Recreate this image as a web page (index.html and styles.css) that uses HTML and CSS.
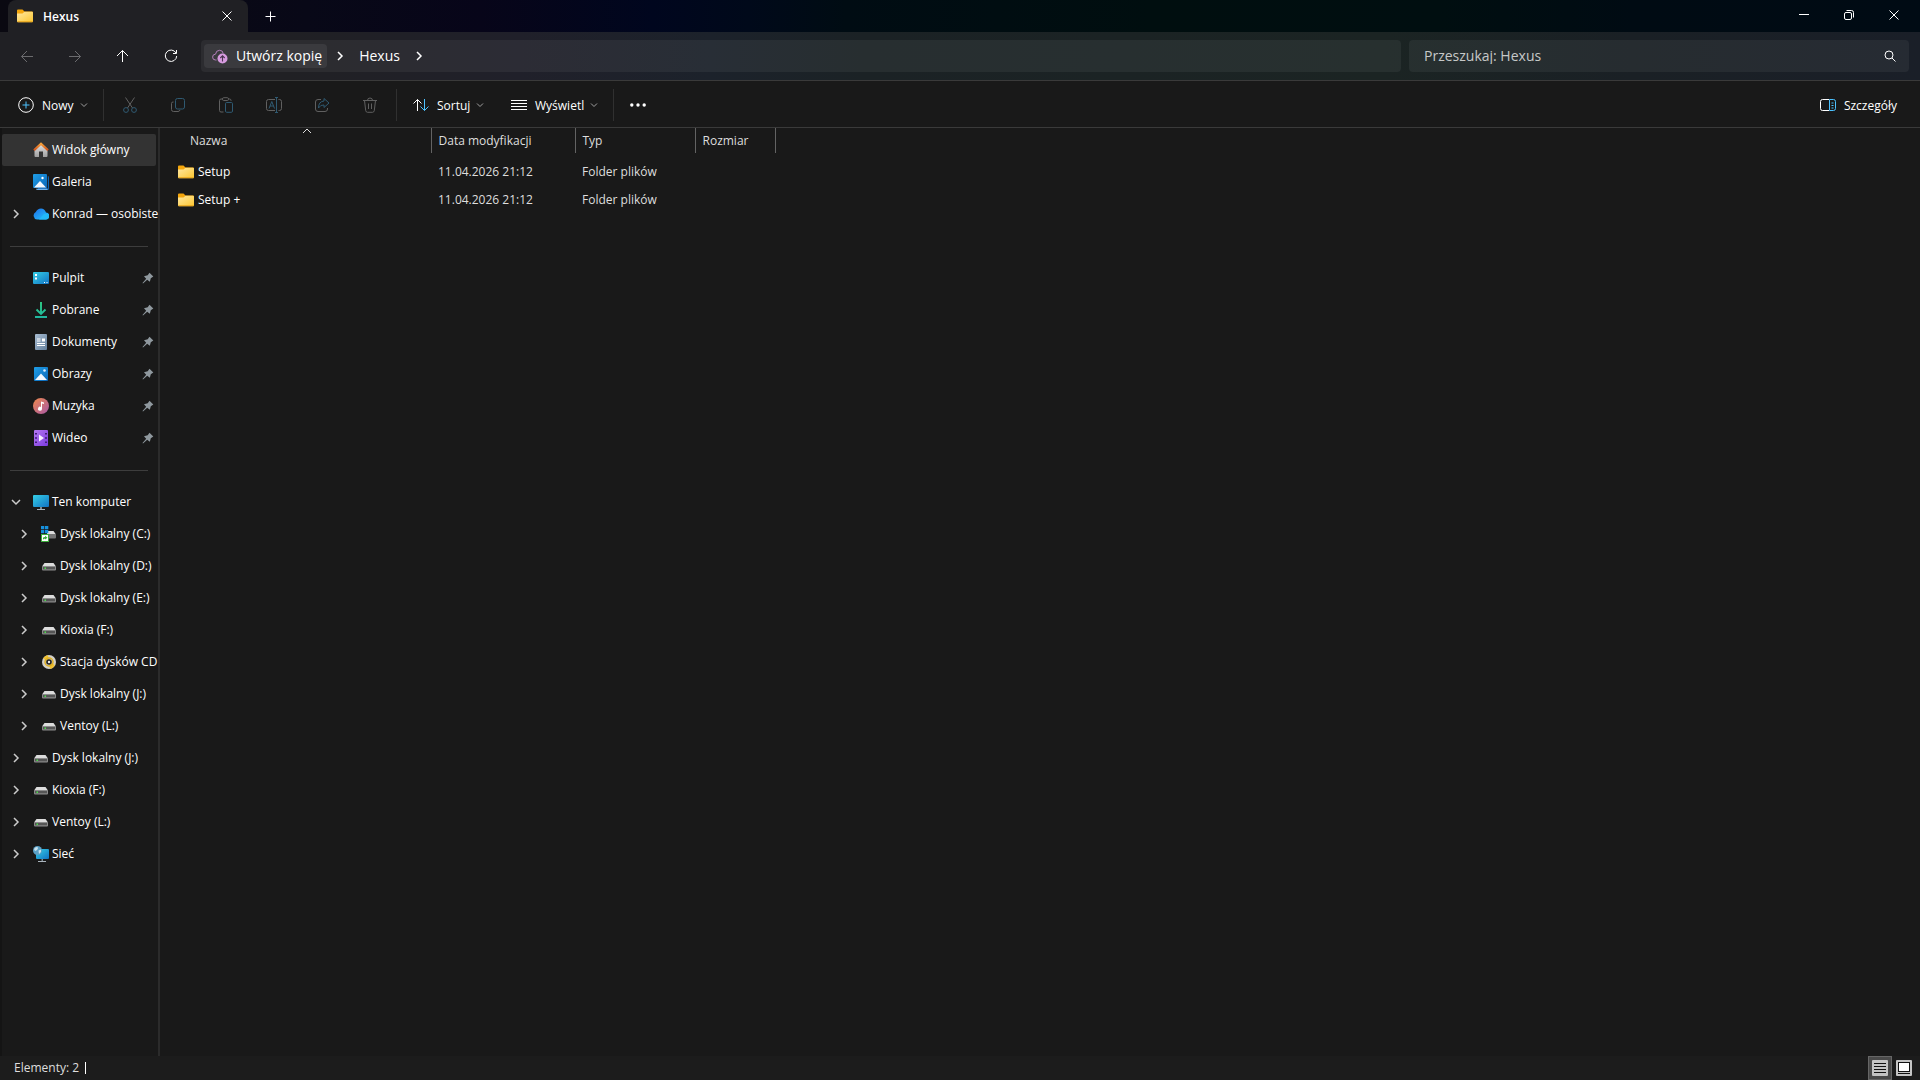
FILE: index.html
```html
<!DOCTYPE html>
<html lang="pl">
<head>
<meta charset="utf-8">
<meta name="viewport" content="width=device-width, initial-scale=1">
<title>Hexus</title>
<link rel="stylesheet" href="styles.css">
</head>
<body>
<svg class="sprite" width="0" height="0" aria-hidden="true">
  <defs>
    <linearGradient id="g-folder" x1="0" y1="0" x2="1" y2="1"><stop offset="0" stop-color="#ffe8a2"/><stop offset="1" stop-color="#fcc630"/></linearGradient>
    <linearGradient id="g-blue" x1="0" y1="0" x2="1" y2="1"><stop offset="0" stop-color="#1f9fe8"/><stop offset="1" stop-color="#0a66b8"/></linearGradient>
    <linearGradient id="g-screen" x1="0" y1="0" x2="1" y2="1"><stop offset="0" stop-color="#35cfe6"/><stop offset="1" stop-color="#1173c4"/></linearGradient>
    <linearGradient id="g-cloud" x1="0" y1="0" x2="1" y2="1"><stop offset="0" stop-color="#1d6fe6"/><stop offset="1" stop-color="#25c8ff"/></linearGradient>
    <linearGradient id="g-wall" x1="0" y1="0" x2="0" y2="1"><stop offset="0" stop-color="#e4e4e4"/><stop offset="1" stop-color="#a0a0a0"/></linearGradient>
    <linearGradient id="g-roof" x1="0" y1="0" x2="0" y2="1"><stop offset="0" stop-color="#f7a13a"/><stop offset="1" stop-color="#d0501a"/></linearGradient>
    <linearGradient id="g-down" gradientUnits="userSpaceOnUse" x1="0" y1="0" x2="0" y2="16"><stop offset="0" stop-color="#2fcf86"/><stop offset="1" stop-color="#1fb5a0"/></linearGradient>
    <linearGradient id="g-doc" x1="0" y1="0" x2="1" y2="1"><stop offset="0" stop-color="#a9bdd2"/><stop offset="1" stop-color="#64809d"/></linearGradient>
    <linearGradient id="g-music" x1="0" y1="0" x2="1" y2="1"><stop offset="0" stop-color="#f08a4b"/><stop offset="1" stop-color="#a757a8"/></linearGradient>
    <linearGradient id="g-video" x1="0" y1="0" x2="1" y2="1"><stop offset="0" stop-color="#b678f2"/><stop offset="1" stop-color="#7b3ae0"/></linearGradient>
  </defs>
  <symbol id="folder" viewBox="0 0 16 16"><path d="M0 2.500Q0 1.500 1 1.500H5.500L7.500 3.500H15Q16 3.500 16 4.500V8H0Z" fill="#f4a60c"/><path d="M0 5.500H5.500L7.500 3.800H15Q16 3.800 16 4.800V13Q16 14.200 15 14.200H1Q0 14.200 0 13Z" fill="url(#g-folder)"/><path d="M.5 13.700H15.500" stroke="#e8a61e"/></symbol>
  <symbol id="close" viewBox="0 0 16 16"><path d="M3.500 3.500L12.500 12.500M12.500 3.500L3.500 12.500" class="ln"/></symbol>
  <symbol id="plus" viewBox="0 0 16 16"><path d="M8.500 3.500V13.500M3.500 8.500H13.500" class="ln"/></symbol>
  <symbol id="minimize" viewBox="0 0 16 16"><path d="M3 7.500H13" class="ln"/></symbol>
  <symbol id="restore" viewBox="0 0 16 16"><rect x="3.500" y="5.500" width="7" height="7" rx="1.500" class="ln"/><path d="M5.500 3.500H10.500Q12.500 3.500 12.500 5.500V10.500" class="ln"/></symbol>
  <symbol id="back" viewBox="0 0 16 16"><path d="M14 8.500H2.500M8 3L2.500 8.500L8 14" class="ln"/></symbol>
  <symbol id="forward" viewBox="0 0 16 16"><path d="M2 8.500H13.500M8 3L13.500 8.500L8 14" class="ln"/></symbol>
  <symbol id="up" viewBox="0 0 16 16"><path d="M7.500 14V2.500M2 8L7.500 2.500L13 8" class="ln"/></symbol>
  <symbol id="refresh" viewBox="0 0 16 16"><path d="M13 5A5.700 5.700 0 1 0 13.700 8M13.500 2V5.500H10" class="ln"/></symbol>
  <symbol id="cloudup" viewBox="0 0 16 16"><path d="M4.500 12H3.500A2.900 2.900 0 0 1 3.500 6.200Q4 2.300 7.500 2.300T11.200 5.500" fill="none" stroke="#b57fbd"/><circle cx="10.500" cy="10.500" r="5" fill="#d79be0"/><path d="M10.500 13.500V8M8.300 10L10.500 7.800L12.700 10" fill="none" stroke="#4b3350" stroke-width="1.100"/></symbol>
  <symbol id="chev" viewBox="0 0 16 16"><path d="M6 4L10 8L6 12" class="ln thick"/></symbol>
  <symbol id="chevdown" viewBox="0 0 16 16"><path d="M4 6L8 10L12 6" class="ln thick"/></symbol>
  <symbol id="caret" viewBox="0 0 8 8"><path d="M1 2.500L4 5.500L7 2.500" class="ln"/></symbol>
  <symbol id="sortup" viewBox="0 0 10 6"><path d="M1 5L5 1L9 5" class="ln"/></symbol>
  <symbol id="search" viewBox="0 0 16 16"><circle cx="7" cy="7" r="4" class="ln"/><path d="M10 10L13.500 13.500" class="ln"/></symbol>
  <symbol id="new" viewBox="0 0 16 16"><circle cx="8" cy="8" r="7.300" class="ln"/><path d="M8 4.500V11.500M4.500 8H11.500" class="ln accent"/></symbol>
  <symbol id="cut" viewBox="0 0 16 16"><path d="M3.500 .5L10.500 11M12.500 .5L5.500 11" class="ln"/><circle cx="4" cy="13" r="2.400" class="ln accent"/><circle cx="12" cy="13" r="2.400" class="ln accent"/></symbol>
  <symbol id="copy" viewBox="0 0 16 16"><path d="M3.500 5H3Q1.500 5 1.500 6.500V12.500Q1.500 14.500 3.500 14.500H8Q9.500 14.500 10 13" class="ln"/><rect x="5.500" y="1.500" width="9" height="10.500" rx="2" class="ln accent"/></symbol>
  <symbol id="paste" viewBox="0 0 16 16"><path d="M5 2H3Q1.500 2 1.500 3.500V13.500Q1.500 15 3 15H5.500M10 2H11.500Q13 2 13 3.500V4" class="ln"/><rect x="4.500" y=".7" width="6" height="2.800" rx="1.200" class="ln"/><rect x="7.500" y="5.500" width="7" height="9.800" rx="1.200" class="ln accent"/></symbol>
  <symbol id="rename" viewBox="0 0 16 16"><path d="M9 2.500H2.500Q.5 2.500 .5 4.500V11.500Q.5 13.500 2.500 13.500H9M12.500 2.500H13.500Q15.500 2.500 15.500 4.500V11.500Q15.500 13.500 13.500 13.500H12.500" class="ln"/><path d="M10.500 .5V15.500M9 .5H12M9 15.500H12M3 11.500L5.800 4.500L8.500 11.500M4 9H7.600" class="ln accent"/></symbol>
  <symbol id="share" viewBox="0 0 16 16"><path d="M7 2.500H4Q1.500 2.500 1.500 5V12Q1.500 14.500 4 14.500H11Q13.500 14.500 13.500 12V11" class="ln"/><path d="M10 1.500L15 6L10 10.500V8Q6.500 7.500 4.500 11Q4.500 4.500 10 4Z" class="ln accent"/></symbol>
  <symbol id="trash" viewBox="0 0 16 16"><path d="M1 3.500H15M5.500 3.500Q5.500 1 8 1T10.500 3.500M2.500 3.500L3.700 13.500Q4 15.300 5.500 15.300H10.500Q12 15.300 12.300 13.500L13.500 3.500M6.500 6.500V12M9.500 6.500V12" class="ln"/></symbol>
  <symbol id="sort" viewBox="0 0 16 16"><path d="M4.500 14V2.500M.5 6.500L4.500 2.500L8.500 6.500" class="ln"/><path d="M11.500 2V13.500M7.500 9.500L11.500 13.500L15.500 9.500" class="ln accent"/></symbol>
  <symbol id="lines" viewBox="0 0 16 16"><path d="M0 3.500H16M0 6.500H16M0 9.500H16M0 12.500H16" class="ln"/></symbol>
  <symbol id="dots" viewBox="0 0 16 16"><circle cx="1.800" cy="8" r="1.700" fill="currentColor"/><circle cx="8" cy="8" r="1.700" fill="currentColor"/><circle cx="14.200" cy="8" r="1.700" fill="currentColor"/></symbol>
  <symbol id="pane" viewBox="0 0 16 16"><path d="M9 2.500H2.500Q.5 2.500 .5 4.500V11.500Q.5 13.500 2.500 13.500H9" class="ln"/><path d="M9.500 2.500H13.500Q15.500 2.500 15.500 4.500V11.500Q15.500 13.500 13.500 13.500H9.500ZM11.500 6H13.500M11.500 8.500H13.500M11.500 11H13.500" class="ln accent"/></symbol>
  <symbol id="pin" viewBox="0 0 12 12"><path d="M7.500 .8L11.300 4.500L8.800 6.300L7.800 9.800L5.200 7.800L1 11.500L.5 11L4.200 6.800L2 4.200L5.700 3.300Z" fill="#8f989e"/></symbol>
  <symbol id="home" viewBox="0 0 16 16"><path d="M1.500 7L8 1.500L14.500 7V14Q14.500 15 13.500 15H10V9.500H6V15H2.500Q1.500 15 1.500 14Z" fill="url(#g-wall)"/><path d="M1 8.200L8 1.700L15 8.200" fill="none" stroke="url(#g-roof)" stroke-width="2.200"/></symbol>
  <symbol id="gallery" viewBox="0 0 16 16"><path d="M3 2H15Q16 2 16 3.500V14.500Q16 16 14.500 16H5Z" fill="#0c62b2"/><path d="M14 1.500H14.800V14.500H14Z" fill="#191919"/><path d="M3 14.700H14.500V16H4.500Q3 16 3 14.700Z" fill="#6eb1ea"/><rect width="14" height="14" rx="1" fill="url(#g-blue)"/><path d="M1 13.500L7 7L13 13.500Z" fill="#f2f8ff"/><circle cx="9.500" cy="4" r="1.200" fill="#fff"/></symbol>
  <symbol id="cloud" viewBox="0 0 16 16"><path d="M4 13.500A4 4 0 0 1 2.800 6Q4.500 2.500 8 2.500T13 6.500A3.500 3.500 0 0 1 12.500 13.500Z" fill="url(#g-cloud)"/><path d="M6 13.500L11 8Q15.500 6.500 16 10Q16 13.500 12.500 13.500Z" fill="#22b8f8"/></symbol>
  <symbol id="desktop" viewBox="0 0 16 16"><rect y="2" width="16" height="12" rx="1" fill="url(#g-screen)"/><path d="M2 4H4V6H2ZM2 7.500H4V9.500H2Z" fill="#fff"/><path d="M11 12.500H12M13.500 12.500H14.500" stroke="#fff"/></symbol>
  <symbol id="download" viewBox="0 0 16 16"><path d="M8 0V12M3.500 7.500L8 12L12.500 7.500M2 15H14" fill="none" stroke="url(#g-down)" stroke-width="1.900"/></symbol>
  <symbol id="docs" viewBox="0 0 16 16"><rect x="2" width="12" height="16" rx="1" fill="url(#g-doc)"/><path d="M4 5H7.500M4 7H7.500M4 9.500H12M4 11.500H12" stroke="#fff"/><path d="M9 4.500H12V7.500H9Z" fill="#fff"/></symbol>
  <symbol id="pictures" viewBox="0 0 16 16"><rect x="1" y="1" width="14" height="14" rx="1" fill="url(#g-blue)"/><path d="M2 14L8 7.500L14 14Z" fill="#f2f8ff"/><circle cx="11.500" cy="4.500" r="1.300" fill="#d9ecff"/></symbol>
  <symbol id="music" viewBox="0 0 16 16"><circle cx="8" cy="8" r="8" fill="url(#g-music)"/><path d="M8 3.500L11 4.500V6L9 5.500V10.500A2 2 0 1 1 8 9Z" fill="#fff"/></symbol>
  <symbol id="video" viewBox="0 0 16 16"><rect x="1" width="14" height="16" rx="1" fill="url(#g-video)"/><path d="M2 3H4V4.500H2ZM2 7.200H4V8.700H2ZM2 11.500H4V13H2ZM12 3H14V4.500H12ZM12 7.200H14V8.700H12ZM12 11.500H14V13H12Z" fill="#3f1d77"/><path d="M6 4.500L11 8L6 11.500Z" fill="#f4ecff"/></symbol>
  <symbol id="pc" viewBox="0 0 16 16"><rect y="1" width="16" height="12" rx="1" fill="url(#g-screen)"/><path d="M7 13H9V15H7Z" fill="#7b8790"/><path d="M4 15.500H12" stroke="#a9b4bc"/></symbol>
  <symbol id="drive" viewBox="0 0 16 16"><path d="M3.500 5H12.500L15 8.500H1Z" fill="#dcdcdc"/><rect x="1" y="8" width="14" height="4.500" rx="1" fill="#8b8b8b"/><path d="M2 9H14V11.300H2Z" fill="#555"/><path d="M3.500 9.500H5V11H3.500Z" fill="#4be04b"/></symbol>
  <symbol id="sysdrive" viewBox="0 0 16 16"><path d="M6 5H12.500L15 8.500H6Z" fill="#dcdcdc"/><rect x="5" y="8" width="10" height="4.500" rx="1" fill="#777"/><path d="M0 0H3.300V3.300H0ZM4 0H7.300V3.300H4ZM0 4H3.300V7.300H0ZM4 4H7.300V7.300H4Z" fill="#1690dc"/><rect x=".5" y="8.500" width="7" height="7" fill="#fff" stroke="#3cae3c"/><path d="M2 13.500V12Q2 11 4 11V9.800L6.500 11.800L4 13.500V12.500Z" fill="#3cae3c"/></symbol>
  <symbol id="disc" viewBox="0 0 16 16"><circle cx="8" cy="8" r="7" fill="#d3d0c8"/><path d="M8 8L2 4.500A7 7 0 0 1 7 1ZM8 8L14 11A7 7 0 0 1 9 15Z" fill="#f0c233"/><circle cx="8" cy="8" r="4" fill="none" stroke="#e0b020" stroke-width="1.500"/><circle cx="8" cy="8" r="2.800" fill="#222"/><circle cx="8" cy="8" r="1.200" fill="#eee"/></symbol>
  <symbol id="network" viewBox="0 0 16 16"><rect x="3" y="3" width="13" height="10" rx="1" fill="url(#g-screen)"/><path d="M8.500 13H10V15H8.500Z" fill="#7b8790"/><path d="M5 15.500H13" stroke="#a9b4bc"/><circle cx="4.500" cy="4.500" r="4.500" fill="#5a9fc4"/><path d="M1 3Q3 0 5 1.500Q5 4 2 5ZM5.500 4.500L8 3.500V6L6 8Z" fill="#c9e2ee"/></symbol>
  <symbol id="vdetails" viewBox="0 0 16 16"><rect width="16" height="16" rx="1" fill="#c4c4c4"/><path d="M2 3.500H14M2 6.500H14M2 9.500H14M2 12.500H14" stroke="#111"/></symbol>
  <symbol id="vlarge" viewBox="0 0 16 16"><rect width="16" height="16" rx="1" fill="#c4c4c4"/><rect x="2.500" y="2.500" width="11" height="9" fill="#fff" stroke="#111"/><path d="M2 13.500H14" stroke="#111"/></symbol>
</svg>

<div class="window">
  <header class="titlebar">
    <div class="tab">
      <svg class="icon"><use href="#folder"/></svg>
      <span class="tab-name">Hexus</span>
      <button class="tab-btn" aria-label="Zamknij kartę"><svg class="icon"><use href="#close"/></svg></button>
    </div>
    <button class="new-tab" aria-label="Nowa karta"><svg class="icon"><use href="#plus"/></svg></button>
    <div class="win-btns">
      <button aria-label="Minimalizuj"><svg class="icon"><use href="#minimize"/></svg></button>
      <button aria-label="Przywróć"><svg class="icon"><use href="#restore"/></svg></button>
      <button aria-label="Zamknij"><svg class="icon"><use href="#close"/></svg></button>
    </div>
  </header>

  <div class="navbar">
    <div class="nav-btns">
      <button disabled aria-label="Wstecz"><svg class="icon"><use href="#back"/></svg></button>
      <button disabled aria-label="Dalej"><svg class="icon"><use href="#forward"/></svg></button>
      <button aria-label="W górę"><svg class="icon"><use href="#up"/></svg></button>
      <button aria-label="Odśwież"><svg class="icon"><use href="#refresh"/></svg></button>
    </div>
    <nav class="address" aria-label="Ścieżka">
      <button class="backup"><svg class="icon"><use href="#cloudup"/></svg>Utwórz kopię</button>
      <svg class="icon"><use href="#chev"/></svg>
      <a href="#hexus">Hexus</a>
      <svg class="icon"><use href="#chev"/></svg>
    </nav>
    <div class="search">
      <input type="search" placeholder="Przeszukaj: Hexus" aria-label="Przeszukaj: Hexus">
      <svg class="icon"><use href="#search"/></svg>
    </div>
  </div>

  <div class="toolbar">
    <button class="cmd cmd-new"><svg class="icon"><use href="#new"/></svg><span>Nowy</span><svg class="caret"><use href="#caret"/></svg></button>
    <div class="cmd-group">
      <button disabled aria-label="Wytnij"><svg class="icon"><use href="#cut"/></svg></button>
      <button disabled aria-label="Kopiuj"><svg class="icon"><use href="#copy"/></svg></button>
      <button disabled aria-label="Wklej"><svg class="icon"><use href="#paste"/></svg></button>
      <button disabled aria-label="Zmień nazwę"><svg class="icon"><use href="#rename"/></svg></button>
      <button disabled aria-label="Udostępnij"><svg class="icon"><use href="#share"/></svg></button>
      <button disabled aria-label="Usuń"><svg class="icon"><use href="#trash"/></svg></button>
    </div>
    <button class="cmd cmd-sort"><svg class="icon"><use href="#sort"/></svg><span>Sortuj</span><svg class="caret"><use href="#caret"/></svg></button>
    <button class="cmd cmd-view"><svg class="icon"><use href="#lines"/></svg><span>Wyświetl</span><svg class="caret"><use href="#caret"/></svg></button>
    <div class="more"><button aria-label="Więcej"><svg class="icon"><use href="#dots"/></svg></button></div>
    <button class="cmd cmd-details"><svg class="icon"><use href="#pane"/></svg><span>Szczegóły</span></button>
  </div>

  <div class="body">
    <nav class="sidebar" aria-label="Okienko nawigacji">
      <ul>
        <li class="selected"><span class="twist"></span><a href="#glowny"><svg class="icon"><use href="#home"/></svg>Widok główny</a></li>
        <li><span class="twist"></span><a href="#galeria"><svg class="icon"><use href="#gallery"/></svg>Galeria</a></li>
        <li><button class="twist" aria-label="Rozwiń"><svg class="icon"><use href="#chev"/></svg></button><a href="#konrad"><svg class="icon"><use href="#cloud"/></svg>Konrad — osobiste</a></li>
      </ul>
      <hr>
      <ul>
        <li><span class="twist"></span><a href="#pulpit"><svg class="icon"><use href="#desktop"/></svg>Pulpit</a><svg class="pin"><use href="#pin"/></svg></li>
        <li><span class="twist"></span><a href="#pobrane"><svg class="icon"><use href="#download"/></svg>Pobrane</a><svg class="pin"><use href="#pin"/></svg></li>
        <li><span class="twist"></span><a href="#dokumenty"><svg class="icon"><use href="#docs"/></svg>Dokumenty</a><svg class="pin"><use href="#pin"/></svg></li>
        <li><span class="twist"></span><a href="#obrazy"><svg class="icon"><use href="#pictures"/></svg>Obrazy</a><svg class="pin"><use href="#pin"/></svg></li>
        <li><span class="twist"></span><a href="#muzyka"><svg class="icon"><use href="#music"/></svg>Muzyka</a><svg class="pin"><use href="#pin"/></svg></li>
        <li><span class="twist"></span><a href="#wideo"><svg class="icon"><use href="#video"/></svg>Wideo</a><svg class="pin"><use href="#pin"/></svg></li>
      </ul>
      <hr>
      <ul>
        <li><button class="twist" aria-label="Zwiń"><svg class="icon"><use href="#chevdown"/></svg></button><a href="#komputer"><svg class="icon"><use href="#pc"/></svg>Ten komputer</a></li>
        <li class="child"><button class="twist" aria-label="Rozwiń"><svg class="icon"><use href="#chev"/></svg></button><a href="#c"><svg class="icon"><use href="#sysdrive"/></svg>Dysk lokalny (C:)</a></li>
        <li class="child"><button class="twist" aria-label="Rozwiń"><svg class="icon"><use href="#chev"/></svg></button><a href="#d"><svg class="icon"><use href="#drive"/></svg>Dysk lokalny (D:)</a></li>
        <li class="child"><button class="twist" aria-label="Rozwiń"><svg class="icon"><use href="#chev"/></svg></button><a href="#e"><svg class="icon"><use href="#drive"/></svg>Dysk lokalny (E:)</a></li>
        <li class="child"><button class="twist" aria-label="Rozwiń"><svg class="icon"><use href="#chev"/></svg></button><a href="#f"><svg class="icon"><use href="#drive"/></svg>Kioxia (F:)</a></li>
        <li class="child"><button class="twist" aria-label="Rozwiń"><svg class="icon"><use href="#chev"/></svg></button><a href="#cd"><svg class="icon"><use href="#disc"/></svg>Stacja dysków CD</a></li>
        <li class="child"><button class="twist" aria-label="Rozwiń"><svg class="icon"><use href="#chev"/></svg></button><a href="#j"><svg class="icon"><use href="#drive"/></svg>Dysk lokalny (J:)</a></li>
        <li class="child"><button class="twist" aria-label="Rozwiń"><svg class="icon"><use href="#chev"/></svg></button><a href="#l"><svg class="icon"><use href="#drive"/></svg>Ventoy (L:)</a></li>
        <li><button class="twist" aria-label="Rozwiń"><svg class="icon"><use href="#chev"/></svg></button><a href="#j2"><svg class="icon"><use href="#drive"/></svg>Dysk lokalny (J:)</a></li>
        <li><button class="twist" aria-label="Rozwiń"><svg class="icon"><use href="#chev"/></svg></button><a href="#f2"><svg class="icon"><use href="#drive"/></svg>Kioxia (F:)</a></li>
        <li><button class="twist" aria-label="Rozwiń"><svg class="icon"><use href="#chev"/></svg></button><a href="#l2"><svg class="icon"><use href="#drive"/></svg>Ventoy (L:)</a></li>
        <li><button class="twist" aria-label="Rozwiń"><svg class="icon"><use href="#chev"/></svg></button><a href="#siec"><svg class="icon"><use href="#network"/></svg>Sieć</a></li>
      </ul>
    </nav>

    <main class="files">
      <table>
        <colgroup><col class="c-name"><col class="c-date"><col class="c-type"><col class="c-size"></colgroup>
        <thead>
          <tr><th scope="col" aria-sort="ascending">Nazwa<svg class="sort-mark"><use href="#sortup"/></svg></th><th scope="col">Data modyfikacji</th><th scope="col">Typ</th><th scope="col">Rozmiar</th></tr>
        </thead>
        <tbody>
          <tr><td><div class="file"><svg class="icon"><use href="#folder"/></svg>Setup</div></td><td>11.04.2026 21:12</td><td>Folder plików</td><td></td></tr>
          <tr><td><div class="file"><svg class="icon"><use href="#folder"/></svg>Setup +</div></td><td>11.04.2026 21:12</td><td>Folder plików</td><td></td></tr>
        </tbody>
      </table>
    </main>
  </div>

  <footer class="status">
    <span class="count">Elementy: 2</span>
    <div class="views">
      <button class="active" aria-label="Szczegóły"><svg class="icon"><use href="#vdetails"/></svg></button>
      <button aria-label="Duże ikony"><svg class="icon"><use href="#vlarge"/></svg></button>
    </div>
  </footer>
</div>
</body>
</html>
```
FILE: styles.css
```css
* { box-sizing: border-box; }

body {
  --accent: #4cc2ff;
  margin: 0;
  background: #191919;
  color: #fff;
  font: 12px/16px "Open Sans", "Noto Sans", sans-serif;
}

button {
  display: flex;
  align-items: center;
  justify-content: center;
  margin: 0;
  padding: 0;
  border: 0;
  background: none;
  color: inherit;
  font: inherit;
}

a { color: inherit; text-decoration: none; }
ul { margin: 0; padding: 0; list-style: none; }

.sprite { position: absolute; }
.icon { width: 16px; height: 16px; flex: none; display: block; }
.caret { width: 8px; height: 8px; flex: none; color: #a0a0a0; }
.ln { fill: none; stroke: currentColor; stroke-width: 1; }
.thick { stroke-width: 1.5; }
.accent { stroke: var(--accent); }

.window { display: flex; flex-direction: column; min-height: 100vh; }

/* Title bar */
.titlebar {
  display: flex;
  height: 32px;
  padding: 0 4px 0 8px;
  background: linear-gradient(90deg, #0a0911 0, #080817 16%, #070519 25%, #00061e 34%, #00091a 39%, #000c13 44%, #000e0f 60%, #000e10 75%, #000b13 85%, #000b14 100%);
}
.tab {
  display: flex;
  align-items: center;
  gap: 10px;
  width: 240px;
  padding: 0 13px 0 9px;
  border-radius: 8px 8px 0 0;
  background: #202024;
}
.tab-name { flex: 1; padding-top: 2px; font-weight: 600; }
.new-tab { width: 44px; }
.win-btns { display: flex; align-items: flex-start; margin-left: auto; }
.win-btns button { width: 45px; height: 29px; }

/* Navigation row */
.navbar {
  display: grid;
  grid-template-columns: 190px minmax(0, 12fr) minmax(0, 5fr);
  gap: 8px;
  height: 49px;
  padding: 8px 11px 8px 3px;
  border-bottom: 1px solid #3a3a3a;
  background: linear-gradient(90deg, #202024 0, #202024 15%, #20202a 27%, #1c222b 37%, #1b2225 45%, #1b2423 72%, #1a2025 85%, #1a1f28 100%);
  font-size: 14px;
}
.nav-btns { display: flex; }
.nav-btns button { width: 48px; flex: none; }
.nav-btns button:disabled { color: #6b6b6e; }
.address, .search {
  display: flex;
  align-items: center;
  border-radius: 4px;
  background: rgba(255, 255, 255, .055);
}
.address { gap: 5px; padding: 0 3px; }
.backup {
  gap: 8px;
  height: 24px;
  padding: 0 5px 0 8px;
  border-radius: 4px;
  background: rgba(255, 255, 255, .07);
}
.address > a { padding: 0 6px; }
.search { padding: 0 11px 0 15px; }
.search input {
  flex: 1;
  min-width: 0;
  padding: 0;
  border: 0;
  outline: 0;
  background: none;
  color: #fff;
  font: inherit;
}
.search input::placeholder { color: #c6c8c8; opacity: 1; }

/* Command bar */
.toolbar {
  display: flex;
  align-items: center;
  height: 47px;
  padding: 2px 23px 0 18px;
  border-bottom: 1px solid #3a3a3a;
  font-weight: 500;
}
.cmd { gap: 8px; height: 32px; justify-content: flex-start; }
.cmd span { padding-top: 2px; }
.cmd .caret { margin-left: -2px; }
.cmd-new { width: 85px; }
.cmd-group {
  display: flex;
  height: 32px;
  padding: 0 2px;
  border: solid #303030;
  border-width: 0 1px;
}
.cmd-group button { width: 48px; color: #606060; --accent: #2f5a72; }
.cmd-sort { width: 98px; margin-left: 16px; }
.cmd-view { width: 102px; }
.more { height: 32px; padding: 8px 16px; border-left: 1px solid #303030; }
.cmd-details { margin-left: auto; }

/* Body */
.body { display: flex; flex: 1; }
.sidebar {
  width: 160px;
  flex: none;
  padding-top: 6px;
  border-left: 2px solid #141414;
  border-right: 2px solid #2b2b2b;
}
.sidebar li { display: flex; align-items: center; height: 32px; padding-right: 4px; }
.sidebar .selected { margin-right: 2px; border-radius: 2px; background: #333; padding-right: 0; }
.sidebar .child { padding-left: 8px; }
.sidebar a {
  display: flex;
  flex: 1;
  align-items: center;
  gap: 3px;
  min-width: 0;
  white-space: nowrap;
}
.sidebar hr { margin: 16px 10px 15px 8px; border: 0; border-top: 1px solid #3d3d3d; }
.twist { width: 31px; padding-right: 3px; flex: none; color: #ccc; }
.pin { width: 12px; height: 12px; flex: none; }

.files { flex: 1; min-width: 0; }
.files table { width: 615px; table-layout: fixed; border-collapse: collapse; }
.c-name { width: 271px; }
.c-date { width: 144px; }
.c-type { width: 120px; }
.c-size { width: 80px; }
.files th {
  position: relative;
  height: 25px;
  padding: 0 0 0 7px;
  border-right: 1px solid #636363;
  color: #dedede;
  font-weight: 400;
  text-align: left;
}
.files th:first-child { padding-left: 30px; }
.sort-mark { position: absolute; top: 0; left: calc(50% + 7px); width: 10px; height: 6px; }
.files td { height: 28px; padding: 0 0 0 7px; color: #dedede; }
.files td:first-child { padding-left: 18px; color: #fff; }
.files tbody::before { content: ""; display: block; height: 5px; }
.file { display: flex; align-items: center; gap: 4px; }

/* Status bar */
.status {
  display: flex;
  align-items: center;
  justify-content: space-between;
  height: 24px;
  padding: 0 4px 0 14px;
  background: #1c1c1c;
  color: #dedede;
}
.count { padding-right: 6px; border-right: 1px solid #fff; line-height: 12px; }
.views { display: flex; }
.views button { width: 24px; height: 24px; }
.views .active { border: 1px solid #666; background: #4a4a4a; }
```
